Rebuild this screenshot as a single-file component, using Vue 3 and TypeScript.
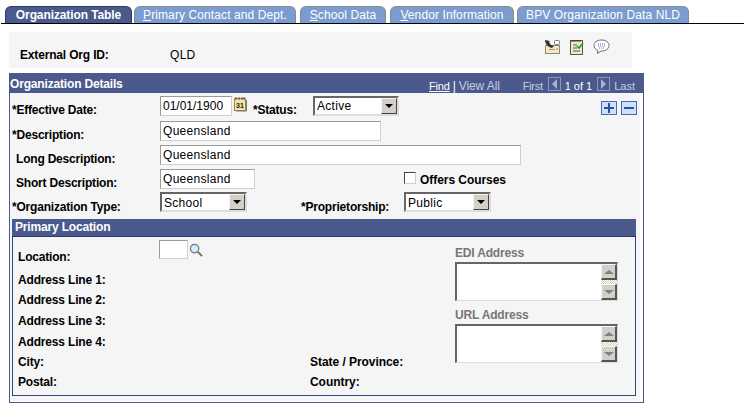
<script setup lang="ts">
interface Tab { key?: string; rest: string; width: number; gap: number; active?: boolean }
const tabs: Tab[] = [
  { rest: 'Organization Table', width: 127, gap: 2, active: true },
  { key: 'P', rest: 'rimary Contact and Dept.', width: 162, gap: 4 },
  { key: 'S', rest: 'chool Data', width: 86, gap: 4 },
  { key: 'V', rest: 'endor Information', width: 124, gap: 3 },
  { rest: 'BPV Organization Data NLD', width: 172, gap: 0 },
]
const addressRows: { text: string; h: number; right?: string }[] = [
  { text: 'Address Line 1:', h: 20 },
  { text: 'Address Line 2:', h: 21 },
  { text: 'Address Line 3:', h: 21 },
  { text: 'Address Line 4:', h: 20 },
  { text: 'City:', h: 20, right: 'State / Province:' },
  { text: 'Postal:', h: 20, right: 'Country:' },
]
</script>

<template>
  <div class="page">
    <div class="tabs">
      <div
        v-for="t in tabs"
        :key="t.rest"
        class="tab"
        :class="{ active: t.active }"
        :style="{ width: t.width + 'px', marginRight: t.gap + 'px' }"
      ><u v-if="t.key">{{ t.key }}</u>{{ t.rest }}</div>
    </div>

    <div class="idbox">
      <span class="b idlabel">External Org ID:</span>
      <span class="idvalue">QLD</span>
      <span class="idicons">
        <svg width="17" height="16" viewBox="0 0 17 16">
          <rect x="1.500" y="6.500" width="14" height="8" fill="#f3e8bf" stroke="#8d8a70"/>
          <path d="M1 1c0 4 3 7 7 8l2-2-3-1-2-3 1-1z" fill="#333"/>
          <rect x="10.500" y="1.500" width="5" height="4" rx="1" fill="#fff" stroke="#777"/>
          <rect x="5" y="10" width="6" height="1" fill="#999"/>
          <rect x="12" y="9" width="2" height="2" fill="#f0a0a0"/>
        </svg>
        <svg width="14" height="16" viewBox="0 0 14 16">
          <rect x="0.500" y="1.500" width="12" height="14" fill="#f3e8bf" stroke="#555"/>
          <path d="M2 1v2M4 1v2M6 1v2M8 1v2M10 1v2" stroke="#333"/>
          <path d="M3 6h4M3 9h4M3 12h7" stroke="#555"/>
          <path d="M7 7l2 2 4-5" fill="none" stroke="#1d9a2a" stroke-width="1.600"/>
        </svg>
        <svg width="17" height="16" viewBox="0 0 17 16">
          <path d="M8.500 1C4 1 1 3.500 1 6.500c0 2.500 2 4.300 4 5l-.5 3 3.500-2.500c5 .2 8-2.500 8-5.500S13 1 8.500 1z" fill="#fff" stroke="#666"/>
          <path d="M5 5h7M5 7h7M6 9h5" stroke="#5a6fd8" stroke-dasharray="1 1"/>
        </svg>
      </span>
    </div>

    <div class="details">
      <div class="dhead">
        <span class="b">Organization Details</span>
        <span class="nav">
          <span class="find">Find</span>
          <span class="pipe">|</span>
          <span class="muted viewall">View All</span>
          <span class="muted first">First</span>
          <span class="navbtn nb1"><i class="tri left"></i></span>
          <span class="count">1 of 1</span>
          <span class="navbtn nb2"><i class="tri right"></i></span>
          <span class="muted">Last</span>
        </span>
      </div>

      <div class="dbody">
        <div class="row r-first">
          <label class="lab star">*Effective Date:</label>
          <span class="input date">01/01/1900</span>
          <svg class="cal" width="13" height="15" viewBox="0 0 13 15">
            <rect x="0.500" y="1.500" width="11" height="12" fill="#f3e3a8" stroke="#a08a4a"/>
            <path d="M12.500 3v11H2" fill="none" stroke="#777"/>
            <path d="M2 0v3M5 0v3M8 0v3M10 0v3" stroke="#555"/>
            <text x="2" y="11" class="caltext">31</text>
          </svg>
          <label class="lab status">*Status:</label>
          <span class="select s-status"><span class="val">Active</span><span class="drop"><i></i></span></span>
          <span class="pm">
            <span class="pmbtn">
              <svg width="10" height="10" viewBox="0 0 10 10"><path d="M4 0h2v4h4v2H6v4H4V6H0V4h4z" fill="#2a4fa8"/></svg>
            </span>
            <span class="pmbtn">
              <svg width="10" height="10" viewBox="0 0 10 10"><path d="M0 4h10v2H0z" fill="#2a4fa8"/></svg>
            </span>
          </span>
        </div>

        <div class="row">
          <label class="lab star">*Description:</label>
          <span class="input w221">Queensland</span>
        </div>
        <div class="row">
          <label class="lab plain">Long Description:</label>
          <span class="input w361">Queensland</span>
        </div>
        <div class="row r-short">
          <label class="lab plain">Short Description:</label>
          <span class="input w95">Queensland</span>
          <span class="check"></span>
          <span class="b checklab">Offers Courses</span>
        </div>
        <div class="row r-type">
          <label class="lab star">*Organization Type:</label>
          <span class="select s-type"><span class="val">School</span><span class="drop"><i></i></span></span>
          <label class="lab prop">*Proprietorship:</label>
          <span class="select s-pub"><span class="val">Public</span><span class="drop"><i></i></span></span>
        </div>

        <div class="primary">
          <div class="phead b">Primary Location</div>
          <div class="pbody">
            <div class="pleft">
              <div class="locrow">
                <label class="lab loc">Location:</label>
                <span class="input w29"></span>
                <svg class="lens" width="14" height="14" viewBox="0 0 15 15">
                  <circle cx="6" cy="6" r="4.500" fill="#d8ecf8" stroke="#5a7a90" stroke-width="1.300"/>
                  <path d="M9.500 9.500L14 14" stroke="#7a6a40" stroke-width="2"/>
                </svg>
              </div>
              <div
                v-for="r in addressRows"
                :key="r.text"
                class="addr"
                :style="{ height: r.h + 'px' }"
              >
                <span class="b addrl">{{ r.text }}</span>
                <span v-if="r.right" class="b addrr">{{ r.right }}</span>
              </div>
            </div>
            <div class="pright">
              <div class="b tlabel tfirst">EDI Address</div>
              <div class="textarea">
                <div class="sbar">
                  <span class="sbtn"><i class="up"></i></span>
                  <span class="strack"></span>
                  <span class="sbtn"><i class="down"></i></span>
                </div>
              </div>
              <div class="b tlabel tsecond">URL Address</div>
              <div class="textarea">
                <div class="sbar">
                  <span class="sbtn"><i class="up"></i></span>
                  <span class="strack"></span>
                  <span class="sbtn"><i class="down"></i></span>
                </div>
              </div>
            </div>
          </div>
        </div>
      </div>
    </div>
  </div>
</template>

<style>
html, body { margin: 0; background: #fff; }
</style>

<style scoped>
.page {
  width: 744px;
  height: 409px;
  overflow: hidden;
  font-family: "Liberation Sans", Arial, sans-serif;
  font-size: 12px;
  color: #000;
  background: #fff;
  box-sizing: border-box;
  padding-top: 6px;
}
.b { font-weight: 700; letter-spacing: -0.17px; }
.tabs {
  display: flex;
  height: 17px;
  margin-left: 1px;
  padding-left: 4px;
  border-bottom: 1px solid #000;
}
.tab {
  box-sizing: border-box;
  height: 17px;
  background: #7a9ccf;
  border: 1px solid #8a8a8a;
  border-bottom: none;
  border-radius: 6px 6px 0 0;
  color: #fff;
  text-align: center;
  line-height: 16px;
  letter-spacing: 0.1px;
  white-space: nowrap;
}
.tab.active {
  background: #4a5a8c;
  border-color: #2f3a60;
  font-weight: 700;
  letter-spacing: -0.1px;
}
.idbox {
  display: flex;
  align-items: center;
  box-sizing: border-box;
  width: 623px;
  height: 36px;
  margin: 8px 0 0 9px;
  background: #f5f5f5;
  position: relative;
}
.idlabel { margin-left: 11px; width: 150px; margin-top: 9px; }
.idvalue { margin-top: 9px; letter-spacing: 0.3px; }
.idicons {
  display: flex;
  gap: 9px;
  margin-left: auto;
  margin-right: 22px;
  margin-top: -6px;
}
.details {
  box-sizing: border-box;
  width: 635px;
  height: 330px;
  margin: 5px 0 0 9px;
  border: 1px solid #4a5a8c;
  border-top: none;
  background: #fff;
}
.dhead {
  display: flex;
  align-items: flex-end;
  justify-content: space-between;
  height: 20px;
  margin: 0 -1px;
  padding: 0 9px 0 1px;
  background: #4a5a8c;
  color: #fff;
  line-height: 14px;
}
.dhead > .b { margin-bottom: 2px; }
.nav { display: flex; align-items: center; font-size: 11px; }
.find { text-decoration: underline; color: #fff; letter-spacing: -0.2px; }
.pipe { margin: 0 3px; font-size: 12px; }
.muted { color: #c4cde0; }
.viewall { font-size: 12px; letter-spacing: -0.1px; }
.first { margin-left: 23px; letter-spacing: -0.3px; }
.navbtn {
  box-sizing: border-box;
  width: 13px;
  height: 14px;
  margin-top: -2px;
  margin-bottom: 2px;
  border: 1px solid #8f98b4;
  display: flex;
  align-items: center;
  justify-content: center;
}
.nb1 { margin-left: 5px; margin-right: 4px; }
.nb2 { margin-left: 5px; margin-right: 4px; }
.tri { display: block; width: 0; height: 0; border-top: 5px solid transparent; border-bottom: 5px solid transparent; }
.tri.left { border-right: 5px solid #aab2c8; }
.tri.right { border-left: 5px solid #aab2c8; }
.count { color: #fff; }
.dbody {
  box-sizing: border-box;
  width: 630px;
  height: 308px;
  background: #f5f5f5;
  padding: 3px 0 0 0;
}
.row {
  display: flex;
  align-items: flex-start;
  height: 24px;
  position: relative;
}
.r-first { height: 25px; }
.r-short { height: 23px; }
.lab { font-weight: 700; line-height: 14px; margin-top: 7px; white-space: nowrap; letter-spacing: -0.2px; }
.star { width: 148px; margin-left: 2px; }
.plain { width: 144px; margin-left: 6px; }
.input {
  box-sizing: border-box;
  display: block;
  height: 20px;
  background: #fff;
  border: 1px solid;
  border-color: #9a9a9a #cfcfcf #cfcfcf #9a9a9a;
  padding: 0 0 0 2px;
  line-height: 19px;
  letter-spacing: 0.3px;
}
.date { width: 72px; letter-spacing: 0; }
.w221 { width: 221px; }
.w361 { width: 361px; }
.w95 { width: 95px; }
.w29 { width: 29px; height: 19px; }
.cal { margin: 1px 0 0 2px; }
.caltext { font: 700 7px "Liberation Sans", sans-serif; fill: #222; }
.status { margin-left: 6px; width: 60px; }
.select {
  box-sizing: border-box;
  display: flex;
  justify-content: space-between;
  height: 20px;
  background: #fff;
  border: 2px solid;
  border-color: #666 #ddd #ddd #666;
  line-height: 17px;
  letter-spacing: 0.3px;
  padding-left: 2px;
}
.s-status { width: 86px; }
.s-type { width: 87px; line-height: 19px; }
.s-pub { width: 87px; line-height: 19px; }
.prop { margin-left: 54px; width: 103px; margin-top: 8px; }
.r-type .star { margin-top: 8px; }
.drop {
  box-sizing: border-box;
  width: 16px;
  height: 16px;
  background: #d4d0c8;
  border: 1px solid;
  border-color: #f5f5f5 #444 #444 #f5f5f5;
  display: flex;
  align-items: center;
  justify-content: center;
}
.drop i {
  display: block;
  width: 0;
  height: 0;
  border-left: 4px solid transparent;
  border-right: 4px solid transparent;
  border-top: 4px solid #000;
}
.pm { display: flex; gap: 4px; margin-top: 5px; position: absolute; left: 591px; }
.pmbtn {
  box-sizing: border-box;
  width: 16px;
  height: 14px;
  background: #cfe0fa;
  border: 1px solid #4a68b8;
  display: flex;
  align-items: center;
  justify-content: center;
}
.check {
  box-sizing: border-box;
  width: 12px;
  height: 12px;
  margin: 3px 0 0 149px;
  background: #fff;
  border: 1px solid;
  border-color: #444 #ccc #ccc #444;
}
.checklab { margin: 4px 0 0 4px; line-height: 14px; letter-spacing: -0.05px; }
.r-type { height: 27px; }
.primary {
  box-sizing: border-box;
  width: 624px;
  height: 177px;
  margin-left: 2px;
  border: 1px solid #2f4a80;
  border-top: none;
}
.phead {
  height: 17px;
  margin: 0 -1px;
  padding-left: 3px;
  background: #4a5a8c;
  border-bottom: 1px solid #2f3a60;
  color: #fff;
  line-height: 17px;
}
.pbody { display: flex; height: 158px; }
.pleft { width: 442px; padding-top: 3px; box-sizing: border-box; }
.locrow { display: flex; height: 33px; align-items: flex-start; }
.loc { width: 141px; margin-left: 5px; margin-top: 10px; }
.lens { margin: 3px 0 0 1px; }
.addr { display: flex; align-items: flex-start; line-height: 14px; }
.addrl { width: 292px; margin-left: 5px; }
.addrr { letter-spacing: -0.05px; }
.pright { width: 163px; }
.tlabel { color: #777; line-height: 14px; margin-bottom: 2px; }
.tfirst { margin-top: 9px; }
.tsecond { margin-top: 7px; }
.textarea {
  box-sizing: border-box;
  position: relative;
  width: 163px;
  height: 39px;
  background: #fff;
  border: 2px solid;
  border-color: #666 #ddd #ddd #666;
  border-right-width: 1px;
  border-bottom-width: 1px;
}
.sbar {
  position: absolute;
  right: 0;
  top: 0;
  width: 16px;
  height: 36px;
  display: flex;
  flex-direction: column;
}
.sbtn {
  box-sizing: border-box;
  height: 16px;
  background: #d4d0c8;
  border-top: 1px solid #f5f5f5;
  border-left: 1px solid #f5f5f5;
  border-right: 2px solid #555;
  border-bottom: 2px solid #555;
  display: flex;
  align-items: center;
  justify-content: center;
}
.strack { flex: 1; background: repeating-conic-gradient(#d4d0c8 0 25%, #fff 0 50%) 0 0 / 2px 2px; }
.sbtn i { display: block; width: 0; height: 0; border-left: 5px solid transparent; border-right: 5px solid transparent; }
.sbtn .up { border-bottom: 4px solid #808080; }
.sbtn .down { border-top: 4px solid #808080; }
</style>
